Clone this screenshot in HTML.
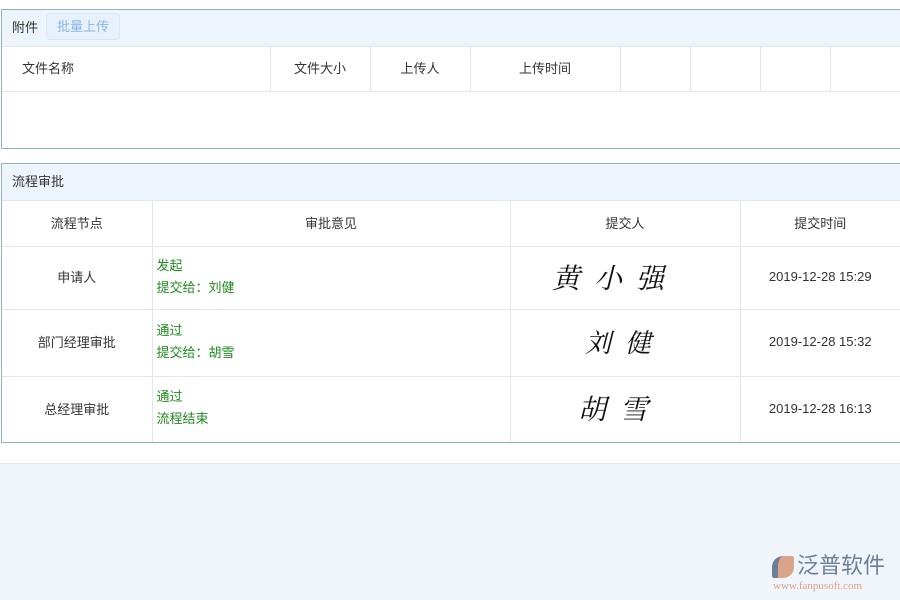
<!DOCTYPE html>
<html><head><meta charset="utf-8"><style>
*{margin:0;padding:0;box-sizing:border-box}
body{width:900px;height:600px;background:#f0f4fb;font-family:"Liberation Sans","Noto Sans CJK SC",sans-serif;font-size:13px;color:#333;position:relative;overflow:hidden}
.top{position:absolute;left:0;top:0;width:900px;height:464px;background:#fff;border-bottom:1px solid #e4e8ee}
.panel{position:absolute;left:1px;width:899px;border:1px solid #8db3bd;border-right:none;background:#fff}
.hd{height:37px;background:#eef4fc;border-bottom:1px solid #e3e6ea;display:flex;align-items:center;padding-left:10px;padding-bottom:3px}
.btn{margin-left:8px;height:27px;padding:0 10px;border:1px solid #d6e6f5;background:#e6f1fb;color:#8ab8e0;border-radius:4px;line-height:25px}
table{border-collapse:collapse;width:100%;table-layout:fixed}
td{border-right:1px solid #e3e6ea;border-bottom:1px solid #e3e6ea;text-align:center;vertical-align:middle;padding-bottom:2px}
.g{color:#1f8a1f;text-align:left;padding-left:4px;line-height:22px}
.sig{font-family:"Noto Serif CJK SC",serif;font-size:28px;color:#111;letter-spacing:14px;font-style:italic}
</style></head><body>
<div class="top"></div>
<div class="panel" style="top:9px;height:140px">
 <div class="hd">附件<span class="btn">批量上传</span></div>
 <table><tr style="height:44px">
 <td style="width:268px;text-align:left;padding-left:20px">文件名称</td><td style="width:100px">文件大小</td><td style="width:100px">上传人</td><td style="width:150px">上传时间</td><td style="width:70px"></td><td style="width:70px"></td><td style="width:70px"></td><td style="border-right:none"></td></tr></table>
</div>
<div class="panel" style="top:163px;height:280px">
 <div class="hd">流程审批</div>
 <table>
 <tr style="height:45px"><td style="width:150px">流程节点</td><td style="width:358px">审批意见</td><td style="width:230px">提交人</td><td style="border-right:none">提交时间</td></tr>
 <tr style="height:63px"><td>申请人</td><td class="g">发起<br>提交给：刘健</td><td><span class="sig" style="margin-left:-20px">黄小强</span></td><td style="border-right:none">2019-12-28 15:29</td></tr>
 <tr style="height:67px"><td>部门经理审批</td><td class="g">通过<br>提交给：胡雪</td><td><span class="sig" style="font-size:26px">刘健</span></td><td style="border-right:none">2019-12-28 15:32</td></tr>
 <tr style="height:66px"><td style="border-bottom:none">总经理审批</td><td class="g" style="border-bottom:none">通过<br>流程结束</td><td style="border-bottom:none"><span class="sig" style="margin-left:-10px">胡雪</span></td><td style="border:none">2019-12-28 16:13</td></tr>
 </table>
</div>
<div style="position:absolute;left:772px;top:556px;width:22px;height:22px;background:#d9a58a;border-radius:50% 10% 50% 10%;border-left:6px solid #6d7f96"></div>
<div style="position:absolute;left:797px;top:553px;font-size:22px;line-height:26px;color:#6d7f96;letter-spacing:0px">泛普软件</div>
<div style="position:absolute;left:773px;top:580px;font-size:11px;color:#d9a58a;font-family:'Liberation Serif',serif">www.fanpusoft.com</div>
</body></html>
